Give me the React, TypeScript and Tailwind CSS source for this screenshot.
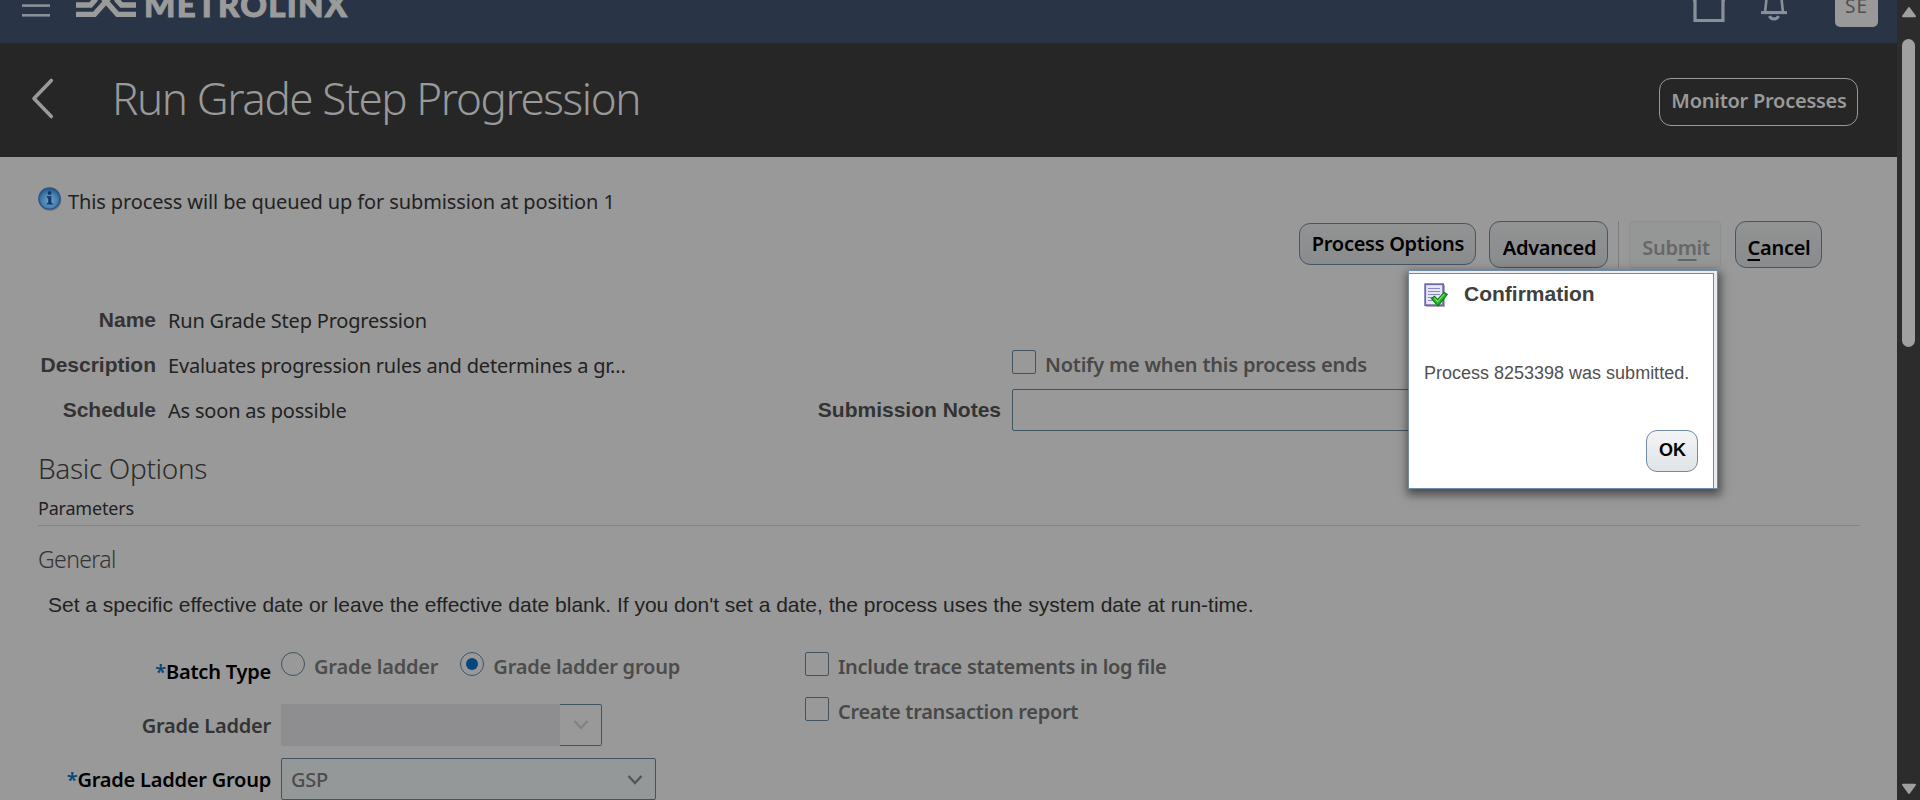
import React from "react";

const SEGOE = "font-['Noto_Sans','Open_Sans',sans-serif]";
const ARIAL = "font-['Liberation_Sans',sans-serif]";

function TopBar() {
  return (
    <header className="flex h-[43px] shrink-0 items-start overflow-hidden bg-[#293547]">
      <svg className="ml-[22px] h-[17px] w-[28px] shrink-0" viewBox="0 0 28 17" fill="#8a9099">
        <rect x="0" y="4.3" width="28" height="2.6" />
        <rect x="0" y="14" width="28" height="2.6" />
      </svg>
      <svg className="ml-[26px] h-[18px] w-[60px] shrink-0" viewBox="0 0 60 18" fill="none" stroke="#9b9b9b" strokeWidth="5.4">
        <path d="M0 5H14.5L20 -1M60 5H45.5L40 -1" />
        <path d="M0 14.4H18.5L33 -2M60 14.4H41.5L27 -2" />
      </svg>
      <div className="-mt-[14px] ml-[8px] whitespace-nowrap font-['Lato',sans-serif] text-[33px] font-black leading-[37px] tracking-[1.25px] text-[#9b9b9b] [-webkit-text-stroke:1px_#9b9b9b]">
        METROLINX
      </div>
      <div className="flex-1" />
      <svg className="h-[24px] w-[32px] shrink-0" viewBox="0 0 32 24" fill="none" stroke="#8a9099" strokeWidth="3">
        <path d="M-1 1.5L3 -2V20.5H29V-2L33 1.5" transform="translate(-1.2 0) scale(1.075 1)" />
      </svg>
      <svg className="ml-[36px] h-[24px] w-[26px] shrink-0" viewBox="0 0 26 24" fill="none" stroke="#8a9099">
        <path d="M5.8 -4L4 12.5H22L20.2 -4" strokeWidth="2.6" />
        <path d="M0 12.6H26" strokeWidth="3" />
        <path d="M8.5 16C10 20 16 20 17.5 16" strokeWidth="3" />
      </svg>
      <div className="ml-[48px] mr-[19px] flex h-[27px] w-[43px] justify-center rounded-b-[5px] bg-[#999]">
        <span className={`-mt-[8px] text-[19px] leading-[28px] tracking-[1px] text-[#505050] ${SEGOE}`}>SE</span>
      </div>
    </header>
  );
}

function TitleBar() {
  return (
    <div className="flex h-[114px] shrink-0 items-start bg-[#262626]">
      <svg className="ml-[31px] mt-[34px] h-[44px] w-[24px] shrink-0" viewBox="0 0 24 44" fill="none" stroke="#999" strokeWidth="3.6" strokeLinecap="round" strokeLinejoin="round">
        <path d="M20.3 3.5L3 21.5L20.3 39.5" />
      </svg>
      <h1 className={`ml-[57px] mt-[25px] whitespace-nowrap text-[44px] font-light leading-[60px] tracking-[-1.4px] text-[#999] ${SEGOE}`}>
        Run Grade Step Progression
      </h1>
      <div className="flex-1" />
      <button className={`mr-[39px] mt-[35px] h-[48px] w-[199px] whitespace-nowrap rounded-[12px] border border-[#999] pb-[2px] pl-px text-[20px] font-semibold leading-[28px] tracking-[-0.25px] text-[#999] ${SEGOE}`}>
        Monitor Processes
      </button>
    </div>
  );
}

function InfoIcon() {
  return (
    <svg className="mt-[4px] h-[24px] w-[24px] shrink-0" viewBox="0 0 24 24">
      <defs>
        <radialGradient id="info" cx="50%" cy="60%" r="60%">
          <stop offset="0" stopColor="#6fa3c4" />
          <stop offset="0.6" stopColor="#447fae" />
          <stop offset="1" stopColor="#1f4f86" />
        </radialGradient>
      </defs>
      <ellipse cx="12" cy="13" rx="11.3" ry="10.8" fill="#777" />
      <circle cx="11.5" cy="11.5" r="10.7" fill="url(#info)" stroke="#2b5585" strokeWidth="1.2" />
      <circle cx="11.6" cy="6" r="1.9" fill="#12356b" />
      <path d="M9 9.3H13.3V16H14.6V17.6H8.8V16H10.2V10.9H9Z" fill="#12356b" />
    </svg>
  );
}

function Toolbar() {
  const base = `flex items-start justify-center whitespace-nowrap text-[20px] font-semibold leading-[28px] tracking-[-0.28px] ${SEGOE}`;
  const live = "rounded-[11px] border border-[#44566a] bg-linear-to-b from-[#929393] to-[#8a8b8d] text-black";
  return (
    <div className="flex h-[47px] items-start justify-end pr-[75px]">
      <button className={`${base} ${live} mt-[2px] h-[42px] w-[177px] pl-px pt-[6px]`}>Process Options</button>
      <button className={`${base} ${live} ml-[13px] h-[47px] w-[119px] pl-[2px] pt-[12px]`}>Advanced</button>
      <div className="ml-[10px] h-[47px] w-px bg-[#7b7f81]" />
      <button className={`${base} ml-[10px] h-[47px] w-[92px] rounded-[3px] border border-[#8c9090] bg-[#959797] pl-[2px] pt-[12px] text-[#676767]`}>
        Sub<span className="underline decoration-2 underline-offset-[4px]">m</span>it
      </button>
      <button className={`${base} ${live} ml-[14px] h-[47px] w-[87px] pl-px pt-[12px]`}>
        <span className="underline decoration-2 underline-offset-[4px]">C</span>ancel
      </button>
    </div>
  );
}

function Checkbox() {
  return <span className="block h-[24px] w-[24px] shrink-0 rounded-[2px] border border-[#42545f]" />;
}

const details = [
  ["Name", "Run Grade Step Progression"],
  ["Description", "Evaluates progression rules and determines a gr..."],
  ["Schedule", "As soon as possible"],
];

function Summary() {
  return (
    <div className="flex h-[182px]">
      <dl className="w-[780px] pt-[38px]">
        {details.map(([k, v]) => (
          <div key={k} className="flex h-[45px] whitespace-nowrap">
            <dt className={`w-[156px] text-right text-[21px] font-bold leading-[28px] text-[#333] ${ARIAL}`}>{k}</dt>
            <dd className={`ml-[12px] pt-px text-[20px] leading-[28px] tracking-[-0.2px] text-[#222] ${SEGOE}`}>{v}</dd>
          </div>
        ))}
      </dl>
      <div className="pt-[82px]">
        <div className="ml-[232px] flex h-[39px]">
          <Checkbox />
          <span className={`ml-[9px] mt-[1px] whitespace-nowrap text-[20px] font-semibold leading-[28px] tracking-[-0.22px] text-[#484848] ${SEGOE}`}>
            Notify me when this process ends
          </span>
        </div>
        <div className="flex">
          <span className={`mt-[7px] w-[221px] whitespace-nowrap text-right text-[21px] font-bold leading-[28px] text-[#333] ${ARIAL}`}>
            Submission Notes
          </span>
          <div className="ml-[11px] h-[42px] w-[600px] rounded-[2px] border border-[#42545f]" />
        </div>
      </div>
    </div>
  );
}

function FieldLabel({ text, required, className = "" }: { text: string; required?: boolean; className?: string }) {
  return (
    <div className={`flex w-[271px] shrink-0 justify-end whitespace-nowrap text-[20px] font-semibold leading-[28px] tracking-[-0.22px] ${SEGOE} ${className}`}>
      {required && <span className="text-[#0a4677]">*</span>}
      {text}
    </div>
  );
}

function Chevron({ className }: { className: string }) {
  return (
    <svg className={`h-[10px] w-[16px] ${className}`} viewBox="0 0 16 10" fill="none" strokeWidth="2.4">
      <path d="M1.5 1L8 8L14.5 1" />
    </svg>
  );
}

function Radio({ checked, label }: { checked?: boolean; label: string }) {
  return (
    <div className="flex">
      <span className="flex h-[24px] w-[24px] shrink-0 items-center justify-center rounded-full border border-[#42545f]">
        {checked && <span className="h-[12px] w-[12px] rounded-full bg-[#04467f]" />}
      </span>
      <span className={`ml-[9px] mt-px whitespace-nowrap text-[20px] font-semibold leading-[28px] tracking-[-0.2px] text-[#4c4c4c] ${SEGOE}`}>{label}</span>
    </div>
  );
}

function General() {
  return (
    <div className="flex pt-[33px]">
      <div className="flex w-[805px] flex-col">
        <div className="flex h-[52px]">
          <FieldLabel required text="Batch Type" className="pt-[6px] text-black" />
          <div className="ml-[10px] flex gap-[22px]">
            <Radio label="Grade ladder" />
            <Radio label="Grade ladder group" checked />
          </div>
        </div>
        <div className="flex h-[54px]">
          <FieldLabel text="Grade Ladder" className="pt-[8px] text-[#333]" />
          <div className="ml-[10px] h-[42px] w-[279px] bg-[#8e8e90]" />
          <div className="flex h-[42px] w-[42px] items-center justify-center rounded-r-[2px] border border-l-0 border-[#42545f]">
            <Chevron className="stroke-[#838383]" />
          </div>
        </div>
        <div className="flex h-[42px]">
          <FieldLabel required text="Grade Ladder Group" className="pt-[8px] text-black" />
          <div className="ml-[10px] flex h-[42px] w-[375px] items-start justify-between rounded-[2px] border border-[#42545f] bg-[#959898] pl-[9px] pr-[12px]">
            <span className={`pt-[7px] text-[20px] font-medium leading-[28px] tracking-[-0.3px] text-[#4c4c4c] ${SEGOE}`}>GSP</span>
            <Chevron className="mt-[16px] stroke-[#555]" />
          </div>
        </div>
      </div>
      <div className="flex flex-col">
        {["Include trace statements in log file", "Create transaction report"].map((t) => (
          <div key={t} className="flex h-[45px]">
            <Checkbox />
            <span className={`ml-[9px] mt-px whitespace-nowrap text-[20px] font-semibold leading-[28px] tracking-[-0.3px] text-[#484848] ${SEGOE}`}>{t}</span>
          </div>
        ))}
      </div>
    </div>
  );
}

function ConfirmDialog() {
  return (
    <div className="absolute left-[1408px] top-[270px] h-[219px] w-[310px] border border-[#6f8ba5] bg-[#e9ecf0] pr-[3px] pt-[2px] shadow-[1px_4px_9px_2px_rgba(0,0,0,0.5)]">
      <div className="flex h-full flex-col border-r border-t border-[#6f8ba5] bg-white">
        <div className="flex pl-[15px] pt-[9px]">
          <svg className="h-[25px] w-[25px]" viewBox="0 0 25 25">
            <rect x="2" y="2" width="19" height="22" fill="#b5b5b5" />
            <rect x="1.2" y="1.2" width="18" height="21" fill="#e6e6f8" stroke="#6a68a6" strokeWidth="1.8" />
            <path d="M4 5.5H16M4 8.5H16M4 11.5H16M4 14.5H11M4 17.5H9" stroke="#8d8bbd" strokeWidth="1.2" />
            <path d="M7.5 15.5L10.5 13.2L13.5 16.5L20 9.5L23.3 11.5L14 22.8Z" fill="#22b822" stroke="#0d7a12" strokeWidth="1.1" />
            <path d="M10.3 15L13.6 18.6L20.2 11.2" fill="none" stroke="#6fe36a" strokeWidth="1.2" />
          </svg>
          <h2 className={`ml-[15px] -mt-[3px] text-[21px] font-bold leading-[28px] text-[#404040] ${ARIAL}`}>Confirmation</h2>
        </div>
        <p className={`mt-[53px] whitespace-nowrap pl-[15px] text-[18px] leading-[24px] text-[#505050] ${ARIAL}`}>Process 8253398 was submitted.</p>
        <button className={`ml-auto mr-[15px] mt-[45px] h-[42px] w-[52px] rounded-[11px] border border-[#6f8ba5] bg-linear-to-b from-[#f3f4f6] to-[#e0e4e7] pb-[2px] pl-px text-[18px] font-bold leading-[24px] text-black ${ARIAL}`}>
          OK
        </button>
      </div>
    </div>
  );
}

function Scrollbar() {
  return (
    <div className="flex h-full w-[23px] shrink-0 flex-col items-center bg-[#2c2c2c]">
      <svg className="mt-[6px] h-[12px] w-[16px]" viewBox="0 0 16 12">
        <path d="M8 2L14 10.3H2Z" fill="#a0a0a0" stroke="#a0a0a0" strokeWidth="2" strokeLinejoin="round" />
      </svg>
      <div className="mt-[21px] h-[308px] w-[13px] rounded-full bg-[#a0a0a0]" />
      <div className="flex-1" />
      <svg className="mb-[5px] h-[12px] w-[16px]" viewBox="0 0 16 12">
        <path d="M8 10L14 1.7H2Z" fill="#a0a0a0" stroke="#a0a0a0" strokeWidth="2" strokeLinejoin="round" />
      </svg>
    </div>
  );
}

export default function App() {
  return (
    <div className="relative flex h-[800px] w-[1920px] overflow-hidden bg-[#999]">
      <div className="flex w-[1897px] shrink-0 flex-col">
        <TopBar />
        <TitleBar />
        <main className="flex flex-col pt-[26px]">
          <div className="flex h-[38px] pl-[38px]">
            <InfoIcon />
            <p className={`ml-[6px] mt-[5px] whitespace-nowrap text-[20px] leading-[28px] tracking-[-0.12px] text-[#222] ${SEGOE}`}>
              This process will be queued up for submission at position 1
            </p>
          </div>
          <Toolbar />
          <Summary />
          <h2 className={`ml-[38px] text-[28px] font-light leading-[36px] tracking-[-0.35px] text-[#2c2c2c] ${SEGOE}`}>Basic Options</h2>
          <div className="ml-[38px] mr-[37px] mt-[10px] h-[30px] border-b border-[#838585]">
            <h3 className={`text-[18px] leading-[24px] tracking-[-0.2px] text-[#222] ${SEGOE}`}>Parameters</h3>
          </div>
          <h3 className={`ml-[38px] mt-[17px] text-[23px] font-light leading-[32px] tracking-[-0.6px] text-[#333] ${SEGOE}`}>General</h3>
          <p className={`ml-[48px] mt-[16px] whitespace-nowrap text-[21px] leading-[28px] text-[#222] ${ARIAL}`}>
            Set a specific effective date or leave the effective date blank. If you don't set a date, the process uses the system date at run-time.
          </p>
          <General />
        </main>
      </div>
      <Scrollbar />
      <ConfirmDialog />
    </div>
  );
}
